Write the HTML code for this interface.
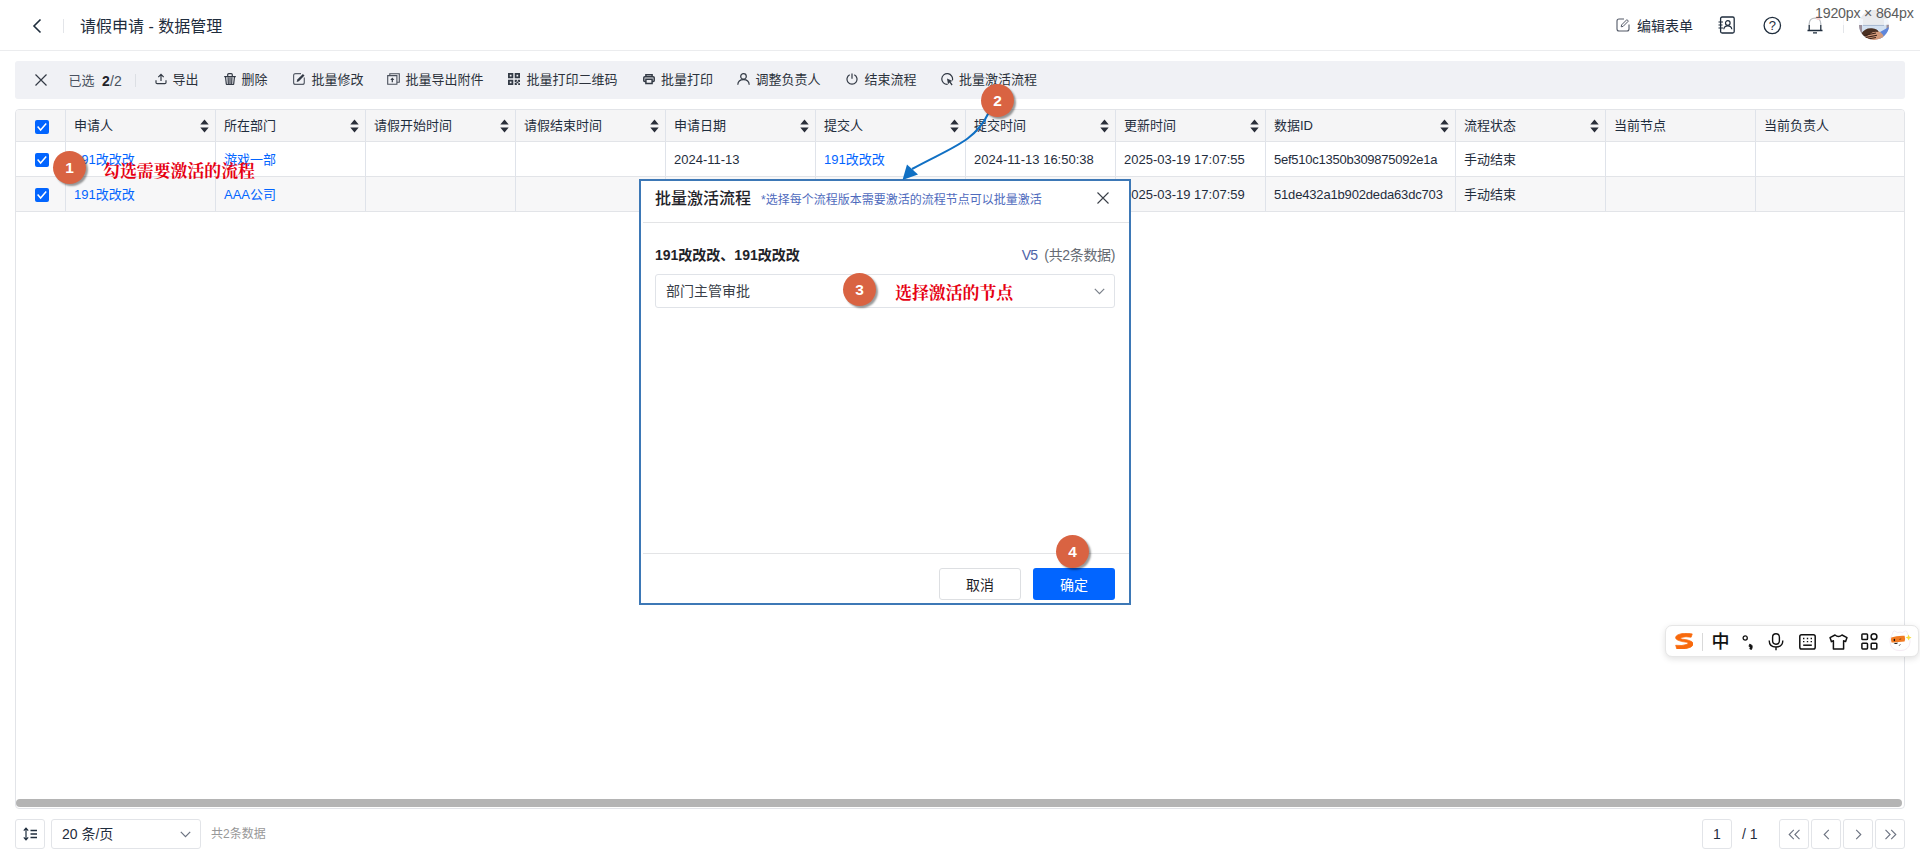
<!DOCTYPE html>
<html lang="zh-CN">
<head>
<meta charset="utf-8">
<title>请假申请 - 数据管理</title>
<style>
*{box-sizing:border-box;margin:0;padding:0}
html,body{width:1920px;height:864px;overflow:hidden;background:#fff}
body{font-family:"Liberation Sans","Noto Sans CJK SC",sans-serif;font-size:13px;color:#1f2329;position:relative}
.abs{position:absolute}
svg{display:block}
/* header */
#hdr{position:absolute;left:0;top:0;width:1920px;height:51px;border-bottom:1px solid #ebecee;background:#fff}
#hdr .title{position:absolute;left:80px;top:15px;font-size:16px;line-height:24px;color:#1f2d3d;white-space:nowrap}
#hdr .sep{position:absolute;left:63px;top:19px;width:1px;height:14px;background:#e3e5e9}
/* toolbar */
#tb{position:absolute;left:15px;top:61px;width:1890px;height:38px;background:#f0f1f5;border-radius:3px}
#tb .it{position:absolute;top:0;height:38px;line-height:38px;font-size:13px;color:#2b313b;white-space:nowrap}
#tb .ic{position:absolute;top:11px}
/* table */
#tbl{position:absolute;left:15px;top:109px;width:1890px;height:700px;border:1px solid #e2e4e8;border-radius:4px;overflow:hidden;background:#fff}
.row{position:absolute;left:0;width:1888px}
.row.h{top:0;height:32px;background:#f5f5f6;border-bottom:1px solid #e2e4e8}
.row.r1{top:32px;height:35px;background:#fff;border-bottom:1px solid #e2e4e8}
.row.r2{top:67px;height:35px;background:#f7f7f8;border-bottom:1px solid #e2e4e8}
.c{position:absolute;top:0;bottom:0;border-right:1px solid #dfe3ea;padding-left:8px;white-space:nowrap;overflow:hidden}
.row.h .c{line-height:32px;color:#1f2d3d}
.row.r1 .c,.row.r2 .c{line-height:35px;color:#1f2d3d}
.c a{color:#0265ff;text-decoration:none}
.cb{position:absolute;left:19px;width:14px;height:14px;background:#0265ff;border-radius:2px}
.cb svg{position:absolute;left:0;top:0}
.srt{position:absolute;right:6.5px;top:9px}

/* header right */
.hr{position:absolute}
/* modal */
#mod{position:absolute;left:639px;top:179px;width:492px;height:426px;border:2px solid #3d78b6;background:#fff}
#mod .in{position:absolute;left:2px;top:1px;right:0;bottom:0;background:#fff}
#mod .mt{position:absolute;left:14px;top:6px;font-size:16px;line-height:24px;font-weight:500;color:#1f2329;white-space:nowrap}
#mod .ms{position:absolute;left:120px;top:10px;font-size:12px;line-height:18px;color:#4f6bbd;white-space:nowrap}
#mod .hl{position:absolute;left:2px;right:0;height:1px;background:#e3e4e6}
#mod .nm{position:absolute;left:14px;top:64px;font-size:14px;line-height:20px;font-weight:700;color:#1f2329;white-space:nowrap}
#mod .vr{position:absolute;right:14px;top:64px;font-size:14px;line-height:20px;color:#666b73;white-space:nowrap;letter-spacing:-0.35px}
#mod .vr b{font-weight:400;color:#4d63a8;margin-right:7px;letter-spacing:-0.8px}
#mod .sel{position:absolute;left:14px;top:93px;width:460px;height:34px;border:1px solid #e0e3e8;border-radius:3px;font-size:14px;line-height:32px;padding-left:10px;color:#3a3f48}
#mod .btn{position:absolute;top:387px;width:82px;height:32px;border-radius:3px;font-size:14px;line-height:32px;text-align:center}
#mod .b1{left:298px;border:1px solid #dddfe2;color:#1f2329;line-height:32px;background:#fff}
#mod .b2{left:392px;background:#0265ff;color:#fff;line-height:34px}
/* annotations */
.num{position:absolute;width:33px;height:33px;border-radius:50%;background:#d96342;color:#fff;font-weight:700;font-size:15.5px;line-height:34px;text-align:center;box-shadow:2px 2px 2px rgba(0,0,0,.4)}
.red{position:absolute;font-family:"Liberation Serif","Noto Serif CJK SC",serif;font-weight:700;font-size:16.9px;line-height:20px;color:#e60012;white-space:nowrap}
/* bottom */
.bx{position:absolute;top:819px;height:30px;border:1px solid #e2e4e8;border-radius:3px;background:#fff}
/* ime */
#ime{position:absolute;left:1665px;top:625px;width:254px;height:32px;background:#fff;border:1px solid #e6e6e6;border-radius:7px;box-shadow:0 2px 6px rgba(0,0,0,.12)}
</style>
</head>
<body>
<div id="hdr">
  <svg class="abs" style="left:31px;top:18px" width="12" height="16" viewBox="0 0 12 16"><path d="M9.5 1.5 L3 8 L9.5 14.5" fill="none" stroke="#1f2d3d" stroke-width="1.6"/></svg>
  <div class="sep"></div>
  <div class="title">请假申请 - 数据管理</div>
</div>
<div id="tb">
<svg class="ic" style="left:20px;top:13px" width="12" height="12" viewBox="0 0 12 12"><path d="M0.5 0.5 L11.5 11.5 M11.5 0.5 L0.5 11.5" stroke="#333a45" stroke-width="1.2" fill="none"/></svg>
<div class="it" style="left:53.5px;color:#4a5160;top:1px">已选</div><div class="it" style="left:87px;font-size:14px;letter-spacing:0.2px;color:#4a5160;top:1px"><b style="color:#1f2329">2</b>/2</div>
<div class="abs" style="left:120px;top:13px;width:1px;height:13px;background:#dcdfe4"></div>
<div class="ic" style="left:140px;top:12px"><svg width="12" height="12" viewBox="0 0 12 12"><path d="M1 7.2 V9.4 Q1 10.6 2.2 10.6 H9.8 Q11 10.6 11 9.4 V7.2 M6 8 V1.6 M3.3 4.1 L6 1.4 L8.7 4.1" stroke="#333a45" fill="none" stroke-width="1.2"/></svg></div><div class="it" style="left:157.5px">导出</div>
<div class="ic" style="left:209px;top:12px"><svg width="12" height="12" viewBox="0 0 12 12"><path d="M0.2 3.6 H11.8" stroke="#333a45" stroke-width="1.2"/><path d="M3.7 3.4 V1.7 Q3.7 0.6 4.8 0.6 H7.2 Q8.3 0.6 8.3 1.7 V3.4 M1.5 3.8 L2.3 10.8 Q2.4 11.5 3.1 11.5 H8.9 Q9.6 11.5 9.7 10.8 L10.5 3.8 M4.1 4.2 L4.3 11 M6 4.2 V11 M7.9 4.2 L7.7 11" stroke="#333a45" fill="none" stroke-width="1.2" stroke-width="1.1"/></svg></div><div class="it" style="left:226.5px">删除</div>
<div class="ic" style="left:278px;top:12px"><svg width="12" height="12" viewBox="0 0 12 12"><path d="M8 0.7 H2.6 Q0.6 0.7 0.6 2.7 V9.4 Q0.6 11.4 2.6 11.4 H9.3 Q11.3 11.4 11.3 9.4 V4.5" stroke="#5a606b" fill="none" stroke-width="1.2"/><path d="M3.6 8.9 L4.3 6.6 L9.9 0.9 L11.5 2.5 L5.9 8.2 Z" fill="#333a45"/></svg></div><div class="it" style="left:296.5px">批量修改</div>
<div class="ic" style="left:372px;top:12px"><svg width="13" height="12" viewBox="0 0 13 12"><path d="M0.7 2.6 H9.9 V11.3 H0.7 Z M2.8 2.4 V0.7 H12.3 V9.2 H10.1" stroke="#4a505b" fill="none" stroke-width="1.1"/><path d="M5.3 9.3 V6 " stroke="#333a45" fill="none" stroke-width="1.2"/><path d="M3.3 6.9 L5.3 4.5 L7.3 6.9 Z" fill="#333a45"/></svg></div><div class="it" style="left:390.5px">批量导出附件</div>
<div class="ic" style="left:493px;top:12px"><svg width="12" height="12" viewBox="0 0 12 12"><path d="M0 0h5.3v5.3h-5.3z M1.8 1.8v1.7h1.7v-1.7z M6.7 0h5.3v5.3h-5.3z M8.5 1.8v1.7h1.7v-1.7z M0 6.7h5.3v5.3h-5.3z M1.8 8.5v1.7h1.7v-1.7z M6.7 6.7h2.2v2.2h-2.2z M9.8 6.7h2.2v2.2h-2.2z M8.2 8.6h2.2v1.6h-2.2z M6.7 9.8h2.2v2.2h-2.2z M10.2 10.2h1.8v1.8h-1.8z" fill="#333a45" fill-rule="evenodd"/></svg></div><div class="it" style="left:511.5px">批量打印二维码</div>
<div class="ic" style="left:627.5px;top:12px"><svg width="12" height="11" viewBox="0 0 12 11" style="margin-top:1px"><path d="M2.9 2.6 V0.8 H9.1 V2.6 M2.6 7.4 H1.8 Q0.8 7.4 0.8 6.4 V3.8 Q0.8 2.8 1.8 2.8 H10.2 Q11.2 2.8 11.2 3.8 V6.4 Q11.2 7.4 10.2 7.4 H9.4 M2.9 5.3 H9.1 V9.4 H2.9 Z" stroke="#333a45" fill="none" stroke-width="1.5"/></svg></div><div class="it" style="left:646.0px">批量打印</div>
<div class="ic" style="left:722px;top:12px"><svg width="13" height="12" viewBox="0 0 13 12"><circle cx="6.5" cy="3.4" r="2.8" stroke="#333a45" fill="none" stroke-width="1.2"/><path d="M0.8 11.8 Q1 6.6 6.5 6.6 Q12 6.6 12.2 11.8" stroke="#333a45" fill="none" stroke-width="1.2"/></svg></div><div class="it" style="left:740.5px">调整负责人</div>
<div class="ic" style="left:831px;top:12px"><svg width="12" height="12" viewBox="0 0 12 12"><path d="M6 0.4 V5.8 M3.7 1.7 A5 5 0 1 0 8.3 1.7" stroke="#333a45" fill="none" stroke-width="1.2"/></svg></div><div class="it" style="left:849.5px">结束流程</div>
<div class="ic" style="left:925.5px;top:12px"><svg width="13" height="13" viewBox="0 0 13 13"><path d="M11.4 7.4 A5.4 5.4 0 1 0 6.6 11.4" stroke="#333a45" fill="none" stroke-width="1.2"/><path d="M6 5.6 L11.6 8 L9.5 8.8 L11.6 11.6 L10.6 12.4 L8.5 9.6 L7 11.2 Z" fill="#333a45"/></svg></div><div class="it" style="left:944.0px">批量激活流程</div>
</div>
<div id="tbl">
<div class="row h">
<div class="c" style="left:0;width:50px"><div class="cb" style="top:10px"><svg width="14" height="14" viewBox="0 0 14 14"><path d="M2.6 6.6 L5.6 10 L11.2 3.6" fill="none" stroke="#fff" stroke-width="1.5"/></svg></div></div>
<div class="c" style="left:50px;width:150px">申请人<svg class="srt" width="9" height="14" viewBox="0 0 9 14"><path d="M0.3 5.6 L4.5 0.6 L8.7 5.6 Z M0.3 8.4 L4.5 13.4 L8.7 8.4 Z" fill="#2a2f3a"/></svg></div>
<div class="c" style="left:200px;width:150px">所在部门<svg class="srt" width="9" height="14" viewBox="0 0 9 14"><path d="M0.3 5.6 L4.5 0.6 L8.7 5.6 Z M0.3 8.4 L4.5 13.4 L8.7 8.4 Z" fill="#2a2f3a"/></svg></div>
<div class="c" style="left:350px;width:150px">请假开始时间<svg class="srt" width="9" height="14" viewBox="0 0 9 14"><path d="M0.3 5.6 L4.5 0.6 L8.7 5.6 Z M0.3 8.4 L4.5 13.4 L8.7 8.4 Z" fill="#2a2f3a"/></svg></div>
<div class="c" style="left:500px;width:150px">请假结束时间<svg class="srt" width="9" height="14" viewBox="0 0 9 14"><path d="M0.3 5.6 L4.5 0.6 L8.7 5.6 Z M0.3 8.4 L4.5 13.4 L8.7 8.4 Z" fill="#2a2f3a"/></svg></div>
<div class="c" style="left:650px;width:150px">申请日期<svg class="srt" width="9" height="14" viewBox="0 0 9 14"><path d="M0.3 5.6 L4.5 0.6 L8.7 5.6 Z M0.3 8.4 L4.5 13.4 L8.7 8.4 Z" fill="#2a2f3a"/></svg></div>
<div class="c" style="left:800px;width:150px">提交人<svg class="srt" width="9" height="14" viewBox="0 0 9 14"><path d="M0.3 5.6 L4.5 0.6 L8.7 5.6 Z M0.3 8.4 L4.5 13.4 L8.7 8.4 Z" fill="#2a2f3a"/></svg></div>
<div class="c" style="left:950px;width:150px">提交时间<svg class="srt" width="9" height="14" viewBox="0 0 9 14"><path d="M0.3 5.6 L4.5 0.6 L8.7 5.6 Z M0.3 8.4 L4.5 13.4 L8.7 8.4 Z" fill="#2a2f3a"/></svg></div>
<div class="c" style="left:1100px;width:150px">更新时间<svg class="srt" width="9" height="14" viewBox="0 0 9 14"><path d="M0.3 5.6 L4.5 0.6 L8.7 5.6 Z M0.3 8.4 L4.5 13.4 L8.7 8.4 Z" fill="#2a2f3a"/></svg></div>
<div class="c" style="left:1250px;width:190px">数据ID<svg class="srt" width="9" height="14" viewBox="0 0 9 14"><path d="M0.3 5.6 L4.5 0.6 L8.7 5.6 Z M0.3 8.4 L4.5 13.4 L8.7 8.4 Z" fill="#2a2f3a"/></svg></div>
<div class="c" style="left:1440px;width:150px">流程状态<svg class="srt" width="9" height="14" viewBox="0 0 9 14"><path d="M0.3 5.6 L4.5 0.6 L8.7 5.6 Z M0.3 8.4 L4.5 13.4 L8.7 8.4 Z" fill="#2a2f3a"/></svg></div>
<div class="c" style="left:1590px;width:150px">当前节点</div>
<div class="c" style="left:1740px;width:150px">当前负责人</div>
</div>
<div class="row r1">
<div class="c" style="left:0;width:50px"><div class="cb" style="top:11px"><svg width="14" height="14" viewBox="0 0 14 14"><path d="M2.6 6.6 L5.6 10 L11.2 3.6" fill="none" stroke="#fff" stroke-width="1.5"/></svg></div></div>
<div class="c" style="left:50px;width:150px"><a>191改改改</a></div>
<div class="c" style="left:200px;width:150px"><a>游戏一部</a></div>
<div class="c" style="left:350px;width:150px"></div>
<div class="c" style="left:500px;width:150px"></div>
<div class="c" style="left:650px;width:150px">2024-11-13</div>
<div class="c" style="left:800px;width:150px"><a>191改改改</a></div>
<div class="c" style="left:950px;width:150px">2024-11-13 16:50:38</div>
<div class="c" style="left:1100px;width:150px">2025-03-19 17:07:55</div>
<div class="c" style="left:1250px;width:190px"><span style="letter-spacing:-0.25px">5ef510c1350b309875092e1a</span></div>
<div class="c" style="left:1440px;width:150px">手动结束</div>
<div class="c" style="left:1590px;width:150px"></div>
<div class="c" style="left:1740px;width:150px"></div>
</div>
<div class="row r2">
<div class="c" style="left:0;width:50px"><div class="cb" style="top:11px"><svg width="14" height="14" viewBox="0 0 14 14"><path d="M2.6 6.6 L5.6 10 L11.2 3.6" fill="none" stroke="#fff" stroke-width="1.5"/></svg></div></div>
<div class="c" style="left:50px;width:150px"><a>191改改改</a></div>
<div class="c" style="left:200px;width:150px"><a>AAA公司</a></div>
<div class="c" style="left:350px;width:150px"></div>
<div class="c" style="left:500px;width:150px"></div>
<div class="c" style="left:650px;width:150px">2024-11-13</div>
<div class="c" style="left:800px;width:150px"><a>191改改改</a></div>
<div class="c" style="left:950px;width:150px">2024-11-13 16:50:42</div>
<div class="c" style="left:1100px;width:150px">2025-03-19 17:07:59</div>
<div class="c" style="left:1250px;width:190px"><span style="letter-spacing:-0.17px">51de432a1b902deda63dc703</span></div>
<div class="c" style="left:1440px;width:150px">手动结束</div>
<div class="c" style="left:1590px;width:150px"></div>
<div class="c" style="left:1740px;width:150px"></div>
</div>
</div>

<!-- header right -->
<svg class="abs" style="left:1616px;top:18px" width="14" height="14" viewBox="0 0 14 14"><path d="M8 1 H3 Q1 1 1 3 V11 Q1 13 3 13 H11 Q13 13 13 11 V6.5" fill="none" stroke="#525967" stroke-width="1.1"/><path d="M5.2 8.8 L5.6 6.9 L10.9 1.6 L12.4 3.1 L7.1 8.4 Z" fill="none" stroke="#525967" stroke-width="1"/></svg>
<div class="abs" style="left:1637px;top:15px;font-size:14px;line-height:22px;color:#1f2d3d;white-space:nowrap">编辑表单</div>
<svg class="abs" style="left:1718px;top:16px" width="18" height="18" viewBox="0 0 18 18"><rect x="2.6" y="1" width="13.6" height="16" rx="1.5" fill="none" stroke="#1f2d3d" stroke-width="1.3"/><path d="M0.5 6 H5 M0.5 9 H4.5 M0.5 12 H5" stroke="#1f2d3d" stroke-width="1.2"/><circle cx="9.8" cy="7" r="2.3" fill="none" stroke="#1f2d3d" stroke-width="1.2"/><path d="M5.8 13.2 Q6.2 9.8 9.8 9.8 Q13.4 9.8 13.8 13.2" fill="none" stroke="#1f2d3d" stroke-width="1.2"/></svg>
<svg class="abs" style="left:1763px;top:16px" width="19" height="19" viewBox="0 0 19 19"><circle cx="9.3" cy="9.5" r="8.2" fill="none" stroke="#1f2d3d" stroke-width="1.3"/><text x="9.3" y="14" font-size="13" text-anchor="middle" fill="#1f2d3d" font-family="Liberation Sans, sans-serif">?</text></svg>
<svg class="abs" style="left:1806px;top:16px" width="18" height="19" viewBox="0 0 18 19"><path d="M1.5 14.5 H16.5 M3.2 14.5 V8 Q3.2 2.2 9 2.2 Q14.8 2.2 14.8 8 V14.5 M7 16.8 H11" fill="none" stroke="#1f2d3d" stroke-width="1.3"/><circle cx="12.5" cy="1.5" r="2.5" fill="#f56c6c"/></svg>
<div class="abs" style="left:1843px;top:19px;width:1px;height:14px;background:#e3e5e9"></div>
<div class="abs" style="left:1859px;top:10px;width:30px;height:30px;border-radius:50%;overflow:hidden"><svg width="30" height="30" viewBox="0 0 30 30"><rect width="30" height="30" fill="#d3e1f1"/><rect x="0" y="0" width="30" height="9" fill="#b9b9be"/><rect x="4" y="7" width="21" height="8" fill="#b4bcc6"/><rect x="4" y="14.6" width="21" height="1" fill="#8fa3bf"/><rect x="0" y="15" width="3" height="8" fill="#9c8f9a"/><rect x="27.5" y="14" width="3" height="7" fill="#9c8f9a"/><path d="M21 22 L30 17 V30 H20 Z" fill="#5f86da"/><ellipse cx="15.5" cy="27" rx="9" ry="6.5" fill="#d39a7a"/><path d="M2 24 Q6 17.5 13 18.2 Q19 18.8 19.5 22 Q14 21 11 24 Q7 27 4.5 27 Z" fill="#4a3022"/><path d="M5 25.5 L17 23 M6 27.6 L18 25.2 M9 29 L17 27.5" stroke="#3a2218" stroke-width="1.1"/></svg></div>
<div class="abs" style="left:1806px;top:2px;width:114px;height:23px;background:rgba(255,255,255,.7)"></div>
<div class="abs" style="left:1815px;top:4px;font-size:14.2px;line-height:18px;color:#5c5c5c;white-space:nowrap;letter-spacing:-0.2px">1920px × 864px</div>

<!-- scrollbar + bottom -->
<div class="abs" style="left:16px;top:799px;width:1886px;height:8px;border-radius:4px;background:#b4b4b4"></div>
<div class="bx" style="left:15px;width:30px"><svg class="abs" style="left:7px;top:7px" width="15" height="14" viewBox="0 0 15 14"><path d="M3 1.2 V12.8 M0.8 3.6 L3 1.2 L5.2 3.6 M0.8 10.4 L3 12.8 L5.2 10.4" fill="none" stroke="#1f2d3d" stroke-width="1.2"/><path d="M7.5 3.5 H14 M7.5 7 H14 M7.5 10.5 H14" stroke="#1f2d3d" stroke-width="1.3"/></svg></div>
<div class="bx" style="left:51px;width:150px;font-size:14px;line-height:28px;padding-left:10px;color:#1f2d3d">20 条/页<svg class="abs" style="left:128px;top:11px" width="11" height="7" viewBox="0 0 11 7"><path d="M0.8 0.8 L5.5 5.6 L10.2 0.8" fill="none" stroke="#6b7280" stroke-width="1.2"/></svg></div>
<div class="abs" style="left:211px;top:825px;font-size:12px;line-height:18px;color:#989898;white-space:nowrap">共2条数据</div>
<div class="bx" style="left:1702px;width:30px;font-size:14px;line-height:28px;text-align:center;color:#1f2d3d">1</div>
<div class="abs" style="left:1742px;top:824px;font-size:14px;line-height:20px;color:#1f2d3d;white-space:nowrap">/ 1</div>
<div class="bx" style="left:1779px;width:30px"><svg class="abs" style="left:8px;top:9px" width="13" height="11" viewBox="0 0 13 11"><path d="M5.8 0.8 L1.2 5.5 L5.8 10.2 M11.5 0.8 L6.9 5.5 L11.5 10.2" fill="none" stroke="#6b7280" stroke-width="1.1"/></svg></div>
<div class="bx" style="left:1811px;width:30px"><svg class="abs" style="left:11px;top:9px" width="7" height="11" viewBox="0 0 7 11"><path d="M5.8 0.8 L1.2 5.5 L5.8 10.2" fill="none" stroke="#6b7280" stroke-width="1.1"/></svg></div>
<div class="bx" style="left:1843px;width:30px"><svg class="abs" style="left:11px;top:9px" width="7" height="11" viewBox="0 0 7 11"><path d="M1.2 0.8 L5.8 5.5 L1.2 10.2" fill="none" stroke="#6b7280" stroke-width="1.1"/></svg></div>
<div class="bx" style="left:1875px;width:30px"><svg class="abs" style="left:8px;top:9px" width="13" height="11" viewBox="0 0 13 11"><path d="M1.5 0.8 L6.1 5.5 L1.5 10.2 M7.2 0.8 L11.8 5.5 L7.2 10.2" fill="none" stroke="#6b7280" stroke-width="1.1"/></svg></div>

<!-- IME -->
<div id="ime">
<svg class="abs" style="left:8.7px;top:6.8px" width="18.6" height="16.6" viewBox="1.6 0.3 16.6 16.2" preserveAspectRatio="none"><path d="M17 1.2 Q9 -0.5 4 2.2 Q0.5 4.5 3.5 7 Q7 9 12 9.3 Q14.5 9.8 12.5 11.3 Q8 13.2 2.2 12.3 L3.2 15.8 Q10 17 15.5 14.2 Q19.5 11.5 16.5 8.6 Q13 6.6 8 6.3 Q5.5 5.8 7.5 4.6 Q11 3.4 16 4.4 Z" fill="#f8690c" stroke="#f8690c" stroke-width="0.7" stroke-linejoin="round"/></svg>
<div class="abs" style="left:36px;top:7px;width:1px;height:18px;background:#d9d9d9"></div>
<div class="abs" style="left:45.5px;top:3.5px;font-size:18px;line-height:24px;font-weight:500;color:#111">中</div>
<svg class="abs" style="left:76px;top:9px" width="12" height="15" viewBox="0 0 12 15"><circle cx="3.2" cy="3" r="2.1" fill="none" stroke="#111" stroke-width="1.3"/><path d="M7.6 9.2 Q11.6 9.6 9.6 14.4 L7.8 14 Q9 12.2 7 11.2 Z" fill="#111" stroke="#111" stroke-width="0.8"/></svg>
<svg class="abs" style="left:102px;top:7px" width="16" height="18" viewBox="0 0 16 18"><rect x="4.6" y="0.8" width="6.8" height="10.4" rx="3.4" fill="none" stroke="#111" stroke-width="1.4"/><path d="M1.2 7.5 Q1.2 14 8 14 Q14.8 14 14.8 7.5 M8 14 V17.2" fill="none" stroke="#111" stroke-width="1.4"/></svg>
<svg class="abs" style="left:133px;top:8px" width="17" height="16" viewBox="0 0 17 16"><rect x="0.8" y="0.8" width="15.4" height="14.2" rx="1.8" fill="none" stroke="#111" stroke-width="1.5"/><path d="M4 4.5 H5.4 M7.8 4.5 H9.2 M11.6 4.5 H13 M4 7.6 H5.4 M7.8 7.6 H9.2 M11.6 7.6 H13" stroke="#111" stroke-width="1.3"/><path d="M4.2 11.2 H12.8" stroke="#111" stroke-width="1.5"/></svg>
<svg class="abs" style="left:163px;top:8px" width="19" height="16" viewBox="0 0 19 16"><path d="M6 1 Q9.5 3.8 13 1 L18 3.6 L16.6 7.6 L14.6 6.8 V15 H4.4 V6.8 L2.4 7.6 L1 3.6 Z" fill="none" stroke="#111" stroke-width="1.5" stroke-linejoin="round"/></svg>
<svg class="abs" style="left:195px;top:7px" width="17" height="17" viewBox="0 0 17 17"><rect x="0.9" y="0.9" width="5.6" height="5.6" rx="0.8" fill="none" stroke="#111" stroke-width="1.5"/><circle cx="13" cy="3.7" r="2.9" fill="none" stroke="#111" stroke-width="1.5"/><rect x="0.9" y="10.3" width="5.6" height="5.6" rx="0.8" fill="none" stroke="#111" stroke-width="1.5"/><rect x="10.2" y="10.3" width="5.6" height="5.6" rx="0.8" fill="none" stroke="#111" stroke-width="1.5"/></svg>
<svg class="abs" style="left:223px;top:3px" width="24" height="23" viewBox="0 0 24 23"><path d="M3 6 Q4 1.5 5.5 1.8 L8.5 3.6 Q11 2.6 13.5 3.6 L16.5 1.8 Q18 1.5 19 6 Q21.5 9.5 21 13 Q20.3 21.6 11 21.6 Q1.7 21.6 1 13 Q0.5 9.5 3 6 Z" fill="#fefefe" stroke="#efe2ee" stroke-width="0.7"/><path d="M2.2 8.6 Q8 6.4 15.6 6.8 Q16.6 9.8 15.6 12.6 Q8 13.6 2.6 13.4 Q1.6 11 2.2 8.6 Z" fill="#f27a22"/><ellipse cx="5.4" cy="11" rx="0.75" ry="1.2" fill="#111"/><path d="M10.4 10.4 L12.2 9.9" stroke="#7a3a10" stroke-width="0.9"/><path d="M4.6 13.9 Q7 16 9.2 13.7 Z" fill="#111"/><path d="M9.9 17 L11.6 15" stroke="#777" stroke-width="0.9"/><path d="M19.6 5.6 L20.5 7.7 L22.6 8.6 L20.5 9.5 L19.6 11.6 L18.7 9.5 L16.6 8.6 L18.7 7.7 Z" fill="#f7dc3c"/></svg>
</div>

<!-- modal -->
<div id="mod">
  <div class="mt">批量激活流程</div>
  <div class="ms">*选择每个流程版本需要激活的流程节点可以批量激活</div>
  <svg class="abs" style="left:456px;top:11px" width="12" height="12" viewBox="0 0 12 12"><path d="M0.5 0.5 L11.5 11.5 M11.5 0.5 L0.5 11.5" stroke="#3a3f48" stroke-width="1.1" fill="none"/></svg>
  <div class="hl" style="top:41px"></div>
  <div class="nm">191改改改、191改改改</div>
  <div class="vr"><b>V5</b>(共2条数据)</div>
  <div class="sel">部门主管审批<svg class="abs" style="left:438px;top:13px" width="11" height="7" viewBox="0 0 11 7"><path d="M0.8 0.8 L5.5 5.6 L10.2 0.8" fill="none" stroke="#7a808a" stroke-width="1.2"/></svg></div>
  <div class="hl" style="top:372px"></div>
  <div class="btn b1">取消</div>
  <div class="btn b2">确定</div>
</div>

<!-- arrow -->
<svg class="abs" style="left:890px;top:100px" width="120" height="90" viewBox="890 100 120 90"><path d="M988.5 113 C 975 142, 950 148, 912 169" fill="none" stroke="#1070c4" stroke-width="2"/><path d="M902.5 180 L907 164.5 L918 174.5 Z" fill="#1070c4"/></svg>

<!-- annotations -->
<div class="num" style="left:53px;top:151px">1</div>
<div class="num" style="left:981px;top:84px">2</div>
<div class="num" style="left:843px;top:273px">3</div>
<div class="num" style="left:1056px;top:535px">4</div>
<div class="red" style="left:103px;top:162px">勾选需要激活的流程</div>
<div class="red" style="left:895px;top:284px">选择激活的节点</div>
</body>
</html>
